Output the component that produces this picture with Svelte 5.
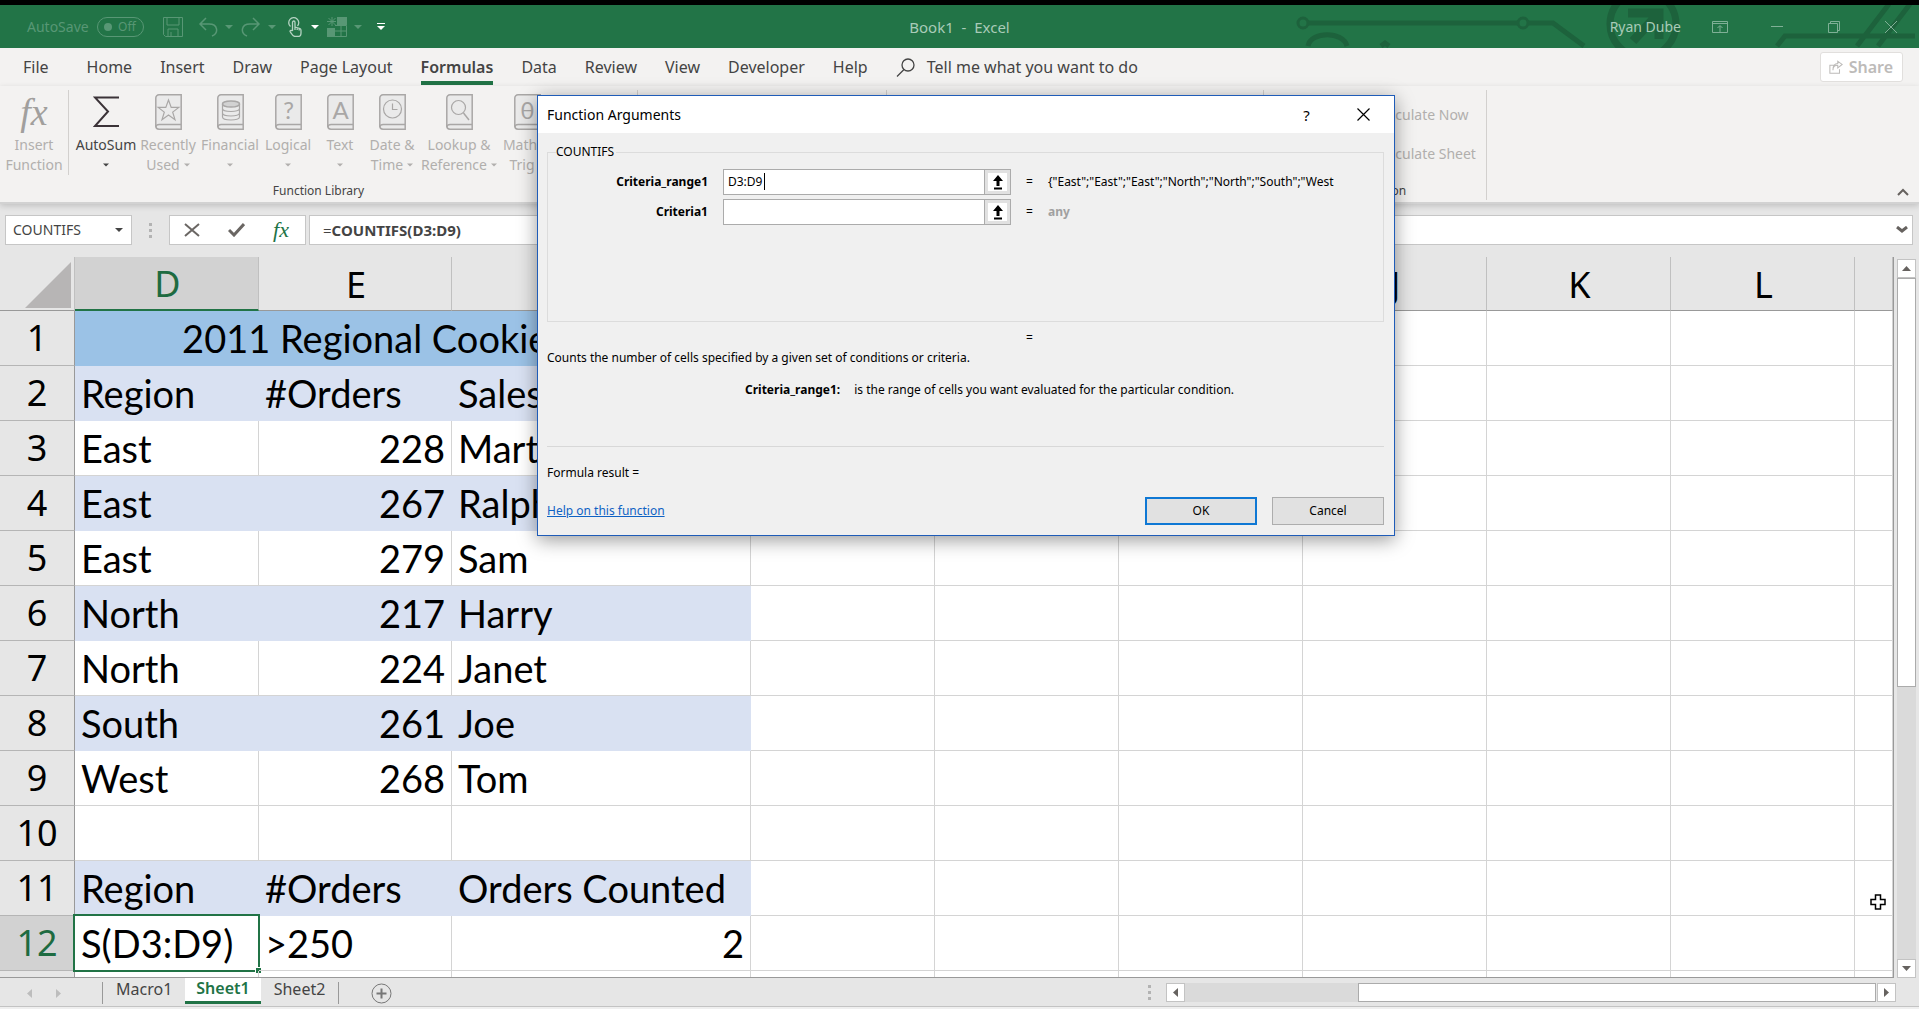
<script lang="ts">
	interface LibraryItem {
		label: string;
		second?: string;
		icon: string;
	}

	interface SheetRow {
		n: number;
		cells: (string | number)[];
		banded?: boolean;
		title?: boolean;
	}

	const ribbonTabs = ['File', 'Home', 'Insert', 'Draw', 'Page Layout', 'Formulas', 'Data', 'Review', 'View', 'Developer', 'Help'];
	const activeTab = 'Formulas';

	const library: LibraryItem[] = [
		{ label: 'AutoSum', icon: 'sum' },
		{ label: 'Recently', second: 'Used', icon: 'star' },
		{ label: 'Financial', icon: 'coins' },
		{ label: 'Logical', icon: '?' },
		{ label: 'Text', icon: 'A' },
		{ label: 'Date &', second: 'Time', icon: 'clock' },
		{ label: 'Lookup &', second: 'Reference', icon: 'search' },
		{ label: 'Math &', second: 'Trig', icon: 'θ' }
	];

	const columns = ['D', 'E', 'F', 'G', 'H', 'I', 'J', 'K', 'L', ''];
	const emptyColumns = [0, 1, 2, 3, 4, 5, 6];

	const rows: SheetRow[] = [
		{ n: 1, cells: ['2011 Regional Cookie Sales'], title: true },
		{ n: 2, cells: ['Region', '#Orders', 'Sales'], banded: true },
		{ n: 3, cells: ['East', 228, 'Mart'] },
		{ n: 4, cells: ['East', 267, 'Ralph'], banded: true },
		{ n: 5, cells: ['East', 279, 'Sam'] },
		{ n: 6, cells: ['North', 217, 'Harry'], banded: true },
		{ n: 7, cells: ['North', 224, 'Janet'] },
		{ n: 8, cells: ['South', 261, 'Joe'], banded: true },
		{ n: 9, cells: ['West', 268, 'Tom'] },
		{ n: 10, cells: ['', '', ''] },
		{ n: 11, cells: ['Region', '#Orders', 'Orders Counted'], banded: true },
		{ n: 12, cells: ['S(D3:D9)', '>250', 2] }
	];

	const sheets = ['Macro1', 'Sheet1', 'Sheet2'];
	let activeSheet = $state('Sheet1');

	let range1 = $state('D3:D9');
	let criteria1 = $state('');
	const rangePreview = '{"East";"East";"East";"North";"North";"South";"West';
</script>

{#snippet caret()}
	<svg class="caret" width="8" height="4" viewBox="0 0 8 4" aria-hidden="true"><path d="M0 0h8L4 4z" fill="currentColor" /></svg>
{/snippet}

{#snippet book(glyph: string)}
	<svg width="27" height="36" viewBox="0 0 27 36" fill="none" stroke="#a9a7a6" stroke-width="1.5" aria-hidden="true">
		<path d="M26.2.8H4A3.2 3.2 0 0 0 .8 4v28A3.2 3.2 0 0 0 4 35.2h22.2z" fill="#eaeaea" />
		<path d="M26 30.5H4.2A3.3 2.5 0 0 0 .8 33" />
		{#if glyph === 'star'}
			<path d="m13.5 6 2.7 7.4h7.6l-6.1 4.7 2.3 7.6-6.5-4.6L7 25.7l2.3-7.6-6.1-4.7h7.6z" stroke-width="1.2" />
		{:else if glyph === 'coins'}
			<ellipse cx="14" cy="10" rx="8.5" ry="3" fill="#d2d2d2" />
			<path d="M5.5 10v13c0 4 17 4 17 0V10M5.5 14.5c0 4 17 4 17 0M5.5 19c0 4 17 4 17 0" stroke-width="1.2" />
		{:else if glyph === 'clock'}
			<circle cx="13.5" cy="15" r="9" stroke-width="1.2" />
			<path d="M13.5 9.5v6h5" stroke-width="1.2" />
		{:else if glyph === 'search'}
			<circle cx="12.5" cy="13.5" r="7" stroke-width="1.2" />
			<path d="m17.5 19 5.5 7" />
		{:else}
			<text class="book-glyph" x="13.5" y="25" text-anchor="middle" stroke="none" fill="#a9a7a6">{glyph}</text>
		{/if}
	</svg>
{/snippet}

{#snippet collapseButton(label: string)}
	<button type="button" class="collapse" aria-label={label}>
		<svg width="12" height="16" viewBox="0 0 12 16" aria-hidden="true"><path d="M6 1 1 7h3.500v5h3V7H11zM2 13.500h8v2H2z" /></svg>
	</button>
{/snippet}

<div class="excel">
	<header class="titlebar">
		<svg class="circuit" width="629" height="43" viewBox="0 0 629 43" fill="none" stroke="#1d623c" stroke-width="5" aria-hidden="true">
			<circle cx="13" cy="18" r="5" stroke-width="3" />
			<circle cx="233" cy="18" r="5" stroke-width="3" />
			<path d="M18 18h210M238 18h25l31 23" />
			<path d="M18 41c3-15 35-15 39 0M91 41l4-3 4 3" />
			<circle cx="353" cy="19" r="33" stroke-width="7" />
			<path d="M338 8h31v26M367 10l-24 26" stroke-width="9" />
			<path d="M487 41l8-10h130M567 41 599-1M588 41 620-1" />
		</svg>

		<div class="quick">
			<span class="autosave">AutoSave</span>
			<button type="button" class="toggle" role="switch" aria-checked="false" aria-label="AutoSave Off"><i></i>Off</button>
			<button type="button" class="quick-btn save" aria-label="Save">
				<svg width="20" height="20" viewBox="0 0 20 20" fill="none" stroke="currentColor"><path d="M.5.5h19v19H2.500l-2-2zM4 1v7h12V1M5 19v-7h10v7M8 19v-4" /></svg>
			</button>
			<button type="button" class="quick-btn" aria-label="Undo">
				<svg width="20" height="20" viewBox="0 0 20 20" fill="none" stroke="currentColor" stroke-width="1.5"><path d="M8 1 2 7l6 6M2 7h9c9 0 10 9 3 12" /></svg>
				{@render caret()}
			</button>
			<button type="button" class="quick-btn" aria-label="Redo">
				<svg width="20" height="20" viewBox="0 0 20 20" fill="none" stroke="currentColor" stroke-width="1.5"><path d="m12 1 6 6-6 6M18 7H9C0 7-1 16 6 19" /></svg>
				{@render caret()}
			</button>
			<button type="button" class="quick-btn live" aria-label="Touch mode">
				<svg width="20" height="20" viewBox="0 0 20 20" fill="none" stroke="#b5d3c2" stroke-width="1.3">
					<path d="M6.500 9.500a5 5 0 1 1 7-.500M8.500 14V5.500c0-2 2.500-2 2.500 0V10l5 1.500c1 .500 1 1 1 2v2.500c0 3-1.500 3.500-3 3.500h-3c-2 0-3-2-5-5 0-1.500 1.500-1.500 2.500-.500M11 10v3M13.200 10.500V13M15.200 11v2.500" />
				</svg>
				{@render caret()}
			</button>
			<button type="button" class="quick-btn" aria-label="Pivot table">
				<svg width="20" height="20" viewBox="0 0 20 20" aria-hidden="true">
					<path d="M10 0h10v8H10zM0 11h8v9H0z" fill="currentColor" />
					<path d="M8 8.500h11.500v11H8M8 14h12M14 8v12M5 0v9M0 4.500h9M1.500 1l7 7M8.500 1l-7 7" stroke="currentColor" fill="none" />
				</svg>
				{@render caret()}
			</button>
			<button type="button" class="quick-btn custom" aria-label="Customize Quick Access Toolbar">
				<svg width="8" height="8" viewBox="0 0 8 8"><path d="M0 0h8v1H0zM0 3h8L4 7z" fill="currentColor" /></svg>
			</button>
		</div>
		<div class="doc-title">Book1&nbsp; -&nbsp; Excel</div>
		<div class="window-side">
			<span class="user">Ryan Dube</span>
			<button type="button" aria-label="Ribbon Display Options">
				<svg width="16" height="12" viewBox="0 0 16 12"><path d="M.5.5h15v11H.5zM.5 2.500h15M8 11V5M5.500 7 8 4.500 10.500 7" /></svg>
			</button>
			<button type="button" aria-label="Minimize"><svg width="12" height="12" viewBox="0 0 12 12"><path d="M0 5.500h12" /></svg></button>
			<button type="button" aria-label="Restore"><svg width="12" height="12" viewBox="0 0 12 12"><path d="M.5 2.500h9v9h-9zM2.500 2V.5h9v9H10" /></svg></button>
			<button type="button" aria-label="Close"><svg width="12" height="12" viewBox="0 0 12 12"><path d="m0 0 12 12M12 0 0 12" /></svg></button>
		</div>
	</header>

	<nav class="tabs">
		{#each ribbonTabs as tab}
			<button type="button" class="tab" class:active={tab === activeTab}>{tab}</button>
		{/each}
		<button type="button" class="tell-me">
			<svg width="19" height="19" viewBox="0 0 19 19" fill="none" stroke="#444" stroke-width="1.3" aria-hidden="true"><circle cx="12" cy="7" r="6" /><path d="m8 11.500-7 7" /></svg>
			Tell me what you want to do
		</button>
		<button type="button" class="share">
			<svg width="14" height="15" viewBox="0 0 16 16" fill="none" stroke="#bdbbb9" stroke-width="1.2" aria-hidden="true"><path d="M6 5.500H1v9h11V10M4.500 11c0-4 2-5.500 5.500-5.500V8.500L15 4.500 10 1v2.500C6 3.500 4.500 7 4.500 11z" /></svg>
			Share
		</button>
	</nav>

	<section class="ribbon">
		<div class="group library-group">
			<div class="group-body">
				<button type="button" class="cmd insert-fn">
					<span class="fx-big">fx</span>
					<span>Insert</span>
					<span>Function</span>
				</button>
				<div class="library">
					{#each library as item}
						<button type="button" class="cmd" class:enabled={item.icon === 'sum'}>
							<span class="cmd-icon">
								{#if item.icon === 'sum'}
									<svg width="26" height="32" viewBox="0 0 26 32" fill="none" stroke="#3b3338" stroke-width="2" aria-hidden="true"><path d="M26 1.500H2L15 15.500 2 30h24" /></svg>
								{:else}
									{@render book(item.icon)}
								{/if}
							</span>
							<span>{item.label}</span>
							<span class="second">{item.second ?? ''} {@render caret()}</span>
						</button>
					{/each}
				</div>
			</div>
			<div class="group-label">Function Library</div>
		</div>
		<div class="group names-group"></div>
		<div class="group audit-group"></div>
		<div class="group calc-group">
			<div class="calc-list">
				<button type="button">Calculate Now</button>
				<button type="button">Calculate Sheet</button>
			</div>
			<div class="group-label">Calculation</div>
		</div>
		<button type="button" class="fold" aria-label="Collapse the Ribbon">
			<svg width="12" height="8" viewBox="0 0 12 8" fill="none" stroke="#66625f" stroke-width="2"><path d="m1 7 5-5 5 5" /></svg>
		</button>
	</section>

	<div class="formula-row">
		<button type="button" class="name-box">COUNTIFS {@render caret()}</button>
		<span class="dots"></span>
		<div class="formula-tools">
			<button type="button" aria-label="Cancel entry"><svg width="16" height="14" viewBox="0 0 16 14" fill="none" stroke="#6a6663" stroke-width="2"><path d="m1 1 14 12M15 1 1 13" /></svg></button>
			<button type="button" aria-label="Enter"><svg width="17" height="14" viewBox="0 0 17 14" fill="none" stroke="#6a6663" stroke-width="3"><path d="m1 7 5 5L16 1" /></svg></button>
			<button type="button" class="fx-small" aria-label="Insert Function">fx</button>
		</div>
		<div class="formula-box">
			<span>=<b>COUNTIFS(D3:D9)</b></span>
			<svg width="12" height="8" viewBox="0 0 12 8" fill="none" stroke="#66625f" stroke-width="3"><path d="m1 1 5 4 5-4" /></svg>
		</div>
	</div>

	<main class="workspace">
		<div class="grid">
			<table>
				<colgroup>
					<col class="col-head" />
					<col class="col-d" />
					<col class="col-e" />
					<col class="col-f" />
					{#each emptyColumns as c}
						<col class:col-rest={c < 6} />
					{/each}
				</colgroup>
				<thead>
					<tr>
						<th class="corner" aria-label="Select all"><svg width="46" height="46" viewBox="0 0 46 46"><path d="M46 0v46H0z" fill="#b7b5b5" /></svg></th>
						{#each columns as column}
							<th class:selected={column === 'D'}>{column}</th>
						{/each}
					</tr>
				</thead>
				<tbody>
					{#each rows as row}
						<tr class:banded={row.banded} class:title-row={row.title}>
							<th class:selected={row.n === 12}>{row.n}</th>
							{#each row.cells as cell, i}
								<td
									class="data"
									class:number={typeof cell === 'number'}
									class:active={row.n === 12 && i === 0}
									colspan={row.title ? 3 : 1}
								>{cell}</td>
							{/each}
							{#each emptyColumns as _}
								<td></td>
							{/each}
						</tr>
					{/each}
					<tr>
						<th></th>
						<td></td><td></td><td></td>
						{#each emptyColumns as _}
							<td></td>
						{/each}
					</tr>
				</tbody>
			</table>
			<svg class="pointer" width="16" height="16" viewBox="0 0 16 16" aria-hidden="true"><path d="M5.500 1h5v4.500H15v5h-4.500V15h-5v-4.500H1v-5h4.500z" fill="#fff" stroke="#000" stroke-width="1.5" /></svg>
		</div>
		<div class="vscroll">
			<button type="button" aria-label="Scroll up"><svg width="9" height="5" viewBox="0 0 9 5"><path d="M0 5h9L4.500 0z" /></svg></button>
			<div class="vtrack"><div class="vthumb"></div></div>
			<button type="button" aria-label="Scroll down"><svg width="9" height="5" viewBox="0 0 9 5"><path d="M0 0h9L4.500 5z" /></svg></button>
		</div>
	</main>

	<footer class="sheet-bar">
		<div class="sheet-nav">
			<button type="button" aria-label="Previous sheet"><svg width="5" height="9" viewBox="0 0 5 9"><path d="M5 0v9L0 4.500z" /></svg></button>
			<button type="button" aria-label="Next sheet"><svg width="5" height="9" viewBox="0 0 5 9"><path d="M0 0v9l5-4.500z" /></svg></button>
		</div>
		<div class="sheets">
			{#each sheets as sheet}
				<button type="button" class="sheet" class:current={sheet === activeSheet} onclick={() => (activeSheet = sheet)}>{sheet}</button>
			{/each}
		</div>
		<button type="button" class="add-sheet" aria-label="New sheet">
			<svg width="21" height="21" viewBox="0 0 21 21" fill="none" stroke="#777"><circle cx="10.5" cy="10.5" r="9.5" /><path d="M5.500 10.500h10M10.500 5.500v10" stroke-width="2" /></svg>
		</button>
		<div class="hscroll">
			<span class="dots"></span>
			<button type="button" aria-label="Scroll left"><svg width="5" height="9" viewBox="0 0 5 9"><path d="M5 0v9L0 4.500z" /></svg></button>
			<div class="htrack"><div class="hthumb"></div></div>
			<button type="button" aria-label="Scroll right"><svg width="5" height="9" viewBox="0 0 5 9"><path d="M0 0v9l5-4.500z" /></svg></button>
		</div>
	</footer>

	<dialog class="fn-dialog" open aria-labelledby="fn-title">
		<div class="dialog-head">
			<h2 id="fn-title">Function Arguments</h2>
			<button type="button" class="help-btn" aria-label="Help">?</button>
			<button type="button" aria-label="Close"><svg width="13" height="13" viewBox="0 0 13 13" fill="none" stroke="#000" stroke-width="1.2"><path d="m.5.5 12 12M12.500.5l-12 12" /></svg></button>
		</div>
		<div class="dialog-body">
			<fieldset>
				<legend>COUNTIFS</legend>
				<div class="arg">
					<label for="range1">Criteria_range1</label>
					<div class="ref-box">
						<input id="range1" type="text" bind:value={range1} />
						<span class="text-cursor"></span>
						{@render collapseButton('Collapse Criteria_range1')}
					</div>
					<span class="eq">=</span>
					<span>{rangePreview}</span>
				</div>
				<div class="arg">
					<label for="criteria1">Criteria1</label>
					<div class="ref-box">
						<input id="criteria1" type="text" bind:value={criteria1} />
						{@render collapseButton('Collapse Criteria1')}
					</div>
					<span class="eq">=</span>
					<span class="any">any</span>
				</div>
			</fieldset>
			<div class="result-eq">=</div>
			<p>Counts the number of cells specified by a given set of conditions or criteria.</p>
			<div class="arg-help">
				<b>Criteria_range1:</b>
				<p>is the range of cells you want evaluated for the particular condition.</p>
			</div>
			<p class="formula-result">Formula result =</p>
			<div class="actions">
				<a href="#help">Help on this function</a>
				<button type="button" class="primary">OK</button>
				<button type="button">Cancel</button>
			</div>
		</div>
	</dialog>
</div>

<style>
	:global(body) {
		margin: 0;
		overflow: hidden;
	}

	.excel {
		position: relative;
		display: flex;
		flex-direction: column;
		height: 100vh;
		background: #e6e6e6;
		color: #444;
		font-family: 'Noto Sans', 'Open Sans', sans-serif;
		font-size: 14px;
		line-height: 20px;
	}

	.excel *,
	.excel *::before,
	.excel *::after {
		box-sizing: border-box;
	}

	button {
		margin: 0;
		padding: 0;
		border: 0;
		background: transparent;
		color: inherit;
		font: inherit;
	}

	svg {
		display: block;
		flex: none;
	}

	p {
		margin: 0;
	}

	/* title bar */
	.titlebar {
		position: relative;
		display: flex;
		align-items: center;
		height: 48px;
		border-top: 5px solid #000;
		background: #227447;
		color: #a9cbb8;
	}

	.circuit {
		position: absolute;
		top: 0;
		right: 0;
	}

	.quick,
	.window-side {
		position: relative;
		display: flex;
		flex: 1;
		align-items: center;
	}

	.quick {
		gap: 8px;
		color: #589775;
	}

	.autosave {
		margin-left: 27px;
	}

	.toggle {
		display: flex;
		align-items: center;
		justify-content: space-between;
		width: 47px;
		height: 20px;
		margin-right: 11px;
		padding: 0 7px 0 6px;
		border: 1px solid #589775;
		border-radius: 10px;
		font-size: 12px;
	}

	.toggle i {
		width: 8px;
		height: 8px;
		border-radius: 50%;
		background: #589775;
	}

	.quick-btn {
		display: flex;
		align-items: center;
		justify-content: space-between;
		width: 35px;
		height: 28px;
	}

	.save {
		width: 27px;
	}

	.live,
	.custom {
		color: #fff;
	}

	.custom {
		justify-content: center;
		width: 22px;
	}

	.doc-title {
		font-size: 15px;
	}

	.window-side {
		justify-content: flex-end;
	}

	.user {
		margin-right: 10px;
	}

	.window-side button {
		display: flex;
		align-items: center;
		justify-content: center;
		width: 57px;
		height: 43px;
	}

	.window-side svg {
		fill: none;
		stroke: #7fb096;
	}

	/* ribbon */
	.tabs {
		display: flex;
		align-items: center;
		gap: 28px;
		height: 38px;
		padding: 0 16px 0 23px;
		background: #f3f2f1;
		font-size: 16px;
	}

	.tab {
		height: 36px;
		border-bottom: 4px solid transparent;
		border-top: 4px solid transparent;
	}

	.tab:first-child {
		margin-right: 10px;
	}

	.tab.active {
		border-bottom-color: #217346;
		font-weight: 600;
	}

	.tell-me {
		display: flex;
		align-items: center;
		gap: 12px;
	}

	.share {
		display: flex;
		align-items: center;
		gap: 6px;
		height: 30px;
		margin-left: auto;
		padding: 0 9px 0 8px;
		border: 1px solid #e1dfdd;
		border-radius: 3px;
		background: #fff;
		color: #bdbbb9;
		font-weight: 600;
	}

	.ribbon {
		position: relative;
		display: flex;
		height: 118px;
		padding: 4px 0 2px;
		border-bottom: 2px solid #d2d2d2;
		background: #f3f2f1;
		box-shadow: 0 2px 6px rgba(0, 0, 0, 0.16);
	}

	.group {
		display: flex;
		flex-direction: column;
		justify-content: space-between;
		border-right: 1px solid #d2d0ce;
	}

	.library-group {
		width: 638px;
	}

	.names-group {
		width: 249px;
	}

	.audit-group {
		width: 377px;
	}

	.calc-group {
		width: 223px;
	}

	.group-body {
		display: flex;
	}

	.group-label {
		font-size: 12px;
		line-height: 18px;
		text-align: center;
	}

	.library {
		display: grid;
		grid-template-columns: 62px 62px 62px 54px 50px 54px 80px 56px;
		padding-left: 6px;
	}

	.cmd {
		display: flex;
		flex-direction: column;
		align-items: center;
		padding-top: 4px;
		color: #b1afad;
		white-space: nowrap;
	}

	.cmd.enabled {
		color: #444;
	}

	.insert-fn {
		width: 69px;
		border-right: 1px solid #d2d0ce;
	}

	.cmd-icon,
	.fx-big {
		display: flex;
		align-items: center;
		height: 36px;
		margin-bottom: 5px;
	}

	.fx-big {
		color: #a19f9d;
		font: italic 38px 'Liberation Serif', serif;
	}

	.book-glyph {
		font: 24px Lato, sans-serif;
	}

	.second {
		display: flex;
		align-items: center;
		gap: 4px;
		height: 20px;
	}

	.caret {
		width: 6px;
	}

	.quick-btn .caret,
	.name-box .caret {
		width: 8px;
	}

	.calc-list {
		display: flex;
		flex-direction: column;
		align-items: flex-start;
		gap: 19px;
		padding: 15px 0 0 111px;
		color: #b1afad;
	}

	.fold {
		margin: auto 10px 4px auto;
	}

	/* formula bar */
	.formula-row {
		display: flex;
		align-items: flex-start;
		height: 53px;
		padding: 11px 6px 0 5px;
	}

	.name-box,
	.formula-tools,
	.formula-box {
		display: flex;
		align-items: center;
		justify-content: space-between;
		height: 30px;
		border: 1px solid #c6c6c6;
		background: #fff;
	}

	.name-box {
		width: 127px;
		padding: 0 8px 0 7px;
	}

	.dots {
		width: 3px;
		height: 16px;
		background: repeating-linear-gradient(#b3b3b3 0 3px, transparent 3px 6px);
	}

	.formula-row .dots {
		margin: 8px 17px 0;
	}

	.formula-tools {
		width: 137px;
		padding: 0 16px 0 14px;
	}

	.fx-small {
		color: #217346;
		font: italic 22px/26px 'Liberation Serif', serif;
	}

	.formula-box {
		flex: 1;
		margin-left: 3px;
		padding: 0 4px 0 13px;
		font-size: 15px;
	}

	/* sheet */
	.workspace {
		display: flex;
		flex: 1;
		min-height: 0;
	}

	.grid {
		position: relative;
		flex: 1;
		min-width: 0;
		overflow: hidden;
		border-right: 1px solid #999;
		border-bottom: 1px solid #999;
	}

	table {
		width: 100%;
		table-layout: fixed;
		border-collapse: separate;
		border-spacing: 0;
		background: #fff;
	}

	.col-head {
		width: 75px;
	}

	.col-d,
	.col-rest {
		width: 184px;
	}

	.col-e {
		width: 193px;
	}

	.col-f {
		width: 299px;
	}

	th {
		height: 55px;
		padding: 0;
		border-right: 1px solid #999;
		border-bottom: 1px solid #b5b5b5;
		background: #e6e6e6;
		color: #000;
		font-size: 36px;
		font-weight: normal;
		line-height: 50px;
	}

	thead th {
		height: 54px;
		padding: 2px 0 0 2px;
		border-right-color: #c0c0c0;
		border-bottom-color: #999;
	}

	th.selected {
		background: #d2d2d2;
		color: #1e6b41;
	}

	thead th.selected {
		border-bottom: 2px solid #217346;
	}

	.corner svg {
		margin: 0 3px 0 auto;
	}

	td {
		position: relative;
		height: 55px;
		padding: 0 6px;
		border-right: 1px solid #d4d4d4;
		border-bottom: 1px solid #d4d4d4;
		color: #000;
		font-family: Lato, Carlito, sans-serif;
		font-size: 38px;
		line-height: 48px;
		white-space: nowrap;
	}

	.number {
		text-align: right;
	}

	.banded .data {
		border-color: #d9e1f2;
		background: #d9e1f2;
	}

	.title-row .data {
		border-color: #9bc2e6;
		background: #9bc2e6;
		text-align: center;
	}

	td.active::before {
		content: '';
		position: absolute;
		inset: -2px -2px -2px -2px;
		border: 2px solid #217346;
	}

	td.active::after {
		content: '';
		position: absolute;
		right: -3px;
		bottom: -3px;
		width: 6px;
		height: 6px;
		border: 1px solid #fff;
		border-width: 1px 0 0 1px;
		background: #217346;
	}

	.pointer {
		position: absolute;
		right: 7px;
		bottom: 67px;
	}

	.vscroll {
		display: flex;
		flex-direction: column;
		width: 25px;
		padding: 2px 3px 0;
	}

	.vscroll button,
	.hscroll button {
		display: flex;
		align-items: center;
		justify-content: center;
		width: 19px;
		height: 19px;
		border: 1px solid #c3c3c3;
		background: #fff;
		fill: #66625f;
	}

	.vtrack {
		flex: 1;
		background: #dadada;
	}

	.vthumb {
		height: 60%;
		border: 1px solid #ababab;
		background: #fff;
	}

	/* sheet tabs */
	.sheet-bar {
		display: flex;
		align-items: flex-start;
		height: 31px;
		box-shadow: inset 0 -2px 0 #efefef, inset 0 -3px 0 #c3c3c3;
	}

	.sheet-nav {
		display: flex;
		gap: 24px;
		width: 102px;
		padding: 11px 0 0 27px;
		fill: #bdbdbd;
	}

	.sheets {
		display: flex;
		margin-top: 4px;
		border-left: 1px solid #999;
		border-right: 1px solid #999;
	}

	.sheet {
		height: 22px;
		padding: 0 13px 8px;
		font-size: 16px;
		line-height: 14px;
	}

	.sheet.current {
		height: 27px;
		margin-top: -5px;
		padding: 2px 11px 5px;
		border-bottom: 3px solid #217346;
		background: #fff;
		color: #217346;
		font-weight: 600;
	}

	.add-sheet {
		margin: 5px 0 0 32px;
	}

	.hscroll {
		display: flex;
		align-items: center;
		width: 748px;
		margin: 5px 23px 0 auto;
	}

	.hscroll .dots {
		margin-right: 15px;
	}

	.htrack {
		display: flex;
		flex: 1;
		justify-content: flex-end;
		height: 19px;
		margin-right: 1px;
		background: #dadada;
	}

	.hthumb {
		width: 75%;
		border: 1px solid #ababab;
		background: #fff;
	}

	/* function arguments dialog */
	.fn-dialog {
		position: absolute;
		top: 95px;
		left: 537px;
		right: auto;
		width: 858px;
		margin: 0;
		padding: 0;
		border: 1px solid #1f5cb8;
		background: #f0f0f0;
		box-shadow: 0 4px 18px rgba(0, 0, 0, 0.4);
		color: #000;
		font-size: 12px;
		line-height: 16px;
	}

	.dialog-head {
		display: flex;
		align-items: center;
		height: 37px;
		padding: 0 2px 0 9px;
		background: #fff;
	}

	.dialog-head h2 {
		flex: 1;
		margin: 0;
		font-size: 14px;
		font-weight: normal;
	}

	.dialog-head button {
		display: flex;
		align-items: center;
		justify-content: center;
		width: 57px;
		height: 36px;
	}

	.dialog-head .help-btn {
		font-size: 15px;
	}

	.dialog-body {
		display: flex;
		flex-direction: column;
		padding: 11px 10px 10px 9px;
	}

	fieldset {
		display: flex;
		flex-direction: column;
		gap: 4px;
		height: 178px;
		margin: 0;
		padding: 9px 0 0;
		border: 1px solid #dcdcdc;
	}

	legend {
		margin-left: 8px;
		padding: 0 2px 0 0;
	}

	.arg {
		display: flex;
		align-items: center;
	}

	.arg label {
		width: 160px;
		margin-right: 15px;
		font-weight: bold;
		text-align: right;
	}

	.ref-box {
		position: relative;
		display: flex;
		width: 288px;
		height: 26px;
	}

	.ref-box input {
		flex: 1;
		min-width: 0;
		padding: 0 4px;
		border: 1px solid #ababab;
		background: #fff;
		color: #000;
		font: inherit;
	}

	.text-cursor {
		position: absolute;
		top: 4px;
		left: 41px;
		width: 1px;
		height: 17px;
		background: #000;
	}

	.collapse {
		display: flex;
		align-items: center;
		justify-content: center;
		width: 27px;
		margin-left: -1px;
		border: 1px solid #ababab;
		background: #fff;
		box-shadow: inset 0 0 0 3px #e1e1e1;
	}

	.eq {
		width: 8px;
		margin: 0 14px 0 15px;
	}

	.any {
		color: #a0a0a0;
		font-weight: bold;
	}

	.result-eq {
		margin: 8px 0 4px 479px;
	}

	.arg-help {
		display: flex;
		gap: 14px;
		height: 65px;
		margin-top: 16px;
		padding-left: 198px;
		border-bottom: 1px solid #d8d8d8;
	}

	.formula-result {
		margin: 18px 0 16px;
	}

	.actions {
		display: flex;
		align-items: center;
		gap: 15px;
	}

	.actions a {
		margin-right: auto;
		color: #0f62c4;
	}

	.actions button {
		width: 112px;
		height: 28px;
		border: 1px solid #adadad;
		background: #e1e1e1;
	}

	.actions .primary {
		border: 2px solid #0f78d4;
	}
</style>
